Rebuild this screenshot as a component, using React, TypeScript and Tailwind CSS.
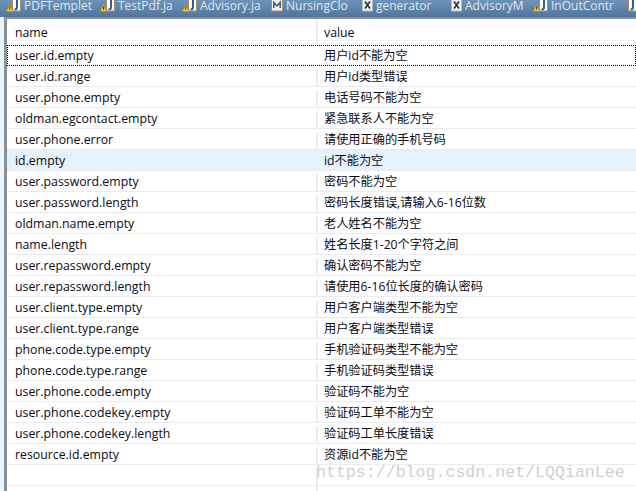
import React from "react";

const rows: [string, string][] = [
  ["user.id.empty", "用户id不能为空"],
  ["user.id.range", "用户id类型错误"],
  ["user.phone.empty", "电话号码不能为空"],
  ["oldman.egcontact.empty", "紧急联系人不能为空"],
  ["user.phone.error", "请使用正确的手机号码"],
  ["id.empty", "id不能为空"],
  ["user.password.empty", "密码不能为空"],
  ["user.password.length", "密码长度错误,请输入6-16位数"],
  ["oldman.name.empty", "老人姓名不能为空"],
  ["name.length", "姓名长度1-20个字符之间"],
  ["user.repassword.empty", "确认密码不能为空"],
  ["user.repassword.length", "请使用6-16位长度的确认密码"],
  ["user.client.type.empty", "用户客户端类型不能为空"],
  ["user.client.type.range", "用户客户端类型错误"],
  ["phone.code.type.empty", "手机验证码类型不能为空"],
  ["phone.code.type.range", "手机验证码类型错误"],
  ["user.phone.code.empty", "验证码不能为空"],
  ["user.phone.codekey.empty", "验证码工单不能为空"],
  ["user.phone.codekey.length", "验证码工单长度错误"],
  ["resource.id.empty", "资源id不能为空"],
  ["", ""],
];

type Kind = "jw" | "m" | "x" | "j";

function TabIcon({ kind }: { kind: Kind }) {
  return (
    <svg width="15" height="12" viewBox="0 0 15 12" className="shrink-0">
      {kind === "jw" || kind === "j" ? (
        <>
          <rect x="6.500" y="-1" width="8" height="12" fill="#fbfbf6" stroke="#a8905c" />
          <path d="M11 0v7q0 2.500-2.500 2.500" fill="none" stroke="#2f5f9f" strokeWidth="2" />
        </>
      ) : kind === "x" ? (
        <>
          <rect x="4.500" y="-1" width="10" height="12" fill="#eef0f2" stroke="#b9bcc0" />
          <path d="M7 1.500l5 7M12 1.500l-5 7" stroke="#2c3148" strokeWidth="1.600" />
        </>
      ) : (
        <>
          <rect x="3.500" y="-1" width="11" height="12" fill="#f6f1df" stroke="#a8905c" />
          <path d="M5.800 8V2.500L9 6l3.200-3.500V8" fill="none" stroke="#2b5b96" strokeWidth="1.500" />
        </>
      )}
      {kind === "jw" && (
        <>
          <path d="M3.500 4.500L7 11.500H0z" fill="#f4bb3c" stroke="#b07f1e" strokeWidth="0.600" />
          <rect x="3" y="6.500" width="1" height="3" fill="#5a3c08" />
        </>
      )}
    </svg>
  );
}

const tabs: { label: string; kind: Kind; w: string }[] = [
  { label: "PDFTemplet", kind: "jw", w: "w-[94px]" },
  { label: "TestPdf.ja", kind: "jw", w: "w-[82px]" },
  { label: "Advisory.ja", kind: "jw", w: "w-[86px]" },
  { label: "NursingClo", kind: "m", w: "w-[90px]" },
  { label: "generator", kind: "x", w: "w-[89px]" },
  { label: "AdvisoryM", kind: "x", w: "w-[86px]" },
  { label: "InOutContr", kind: "jw", w: "w-[89px]" },
  { label: "", kind: "j", w: "w-[20px]" },
];

export default function App() {
  return (
    <div
      className="relative w-[636px] h-[491px] overflow-hidden bg-white text-[#0b0b14] text-[12.3px]"
      style={{ fontFamily: '"Open Sans","Noto Sans CJK SC",sans-serif' }}
    >
      <div className="h-[17px] flex items-start pl-[6px] overflow-hidden bg-gradient-to-b from-[#6f93b8] to-[#4f769d]">
        {tabs.map((t, i) => (
          <div key={i} className={`${t.w} shrink-0 flex items-start gap-[3px] text-[#dfe8f2] text-[12px] leading-[12px]`}>
            <TabIcon kind={t.kind} />
            <span className="whitespace-nowrap">{t.label}</span>
          </div>
        ))}
      </div>
      <div className="h-[474px] flex">
        <div className="w-[4px] bg-[#f0f3f7]" />
        <div className="w-[2px] bg-[#7f94ab]" />
        <div className="flex-1 border-l border-t-2 border-[#8c9096] bg-white">
          <div className="flex h-[26px] items-center">
            <div className="w-[311px] pl-[8px] pt-[3px] border-r-2 border-[#ececec] h-full flex items-center">name</div>
            <div className="pl-[6px] pt-[3px]">value</div>
          </div>
          {rows.map(([a, b], i) => (
            <div
              key={i}
              className={`flex h-[21px] items-center ${i === 0 ? "border border-dotted border-black pt-[2px]" : "border-b border-[#e8ecef] pt-[3px]"} ${i === 5 ? "bg-[#e5f1fb]" : ""}`}
            >
              <div className={`${i === 0 ? "w-[310px] pl-[7px]" : "w-[311px] pl-[8px]"} h-full flex items-center border-r-2 ${i === 0 ? "border-transparent" : "border-[#ececec]"}`}>
                {a}
              </div>
              <div className="pl-[6px] whitespace-nowrap text-[12.2px]">{b}</div>
            </div>
          ))}
          <div className="h-[6px] w-[311px] border-r-2 border-[#ececec]" />
        </div>
      </div>
      <div
        className="absolute left-[316px] top-[463px] text-[16.6px] leading-[20px] text-[#d0d0d0] whitespace-nowrap"
        style={{ fontFamily: '"Liberation Mono",monospace' }}
      >
        https://blog.csdn.net/LQQianLee
      </div>
    </div>
  );
}
